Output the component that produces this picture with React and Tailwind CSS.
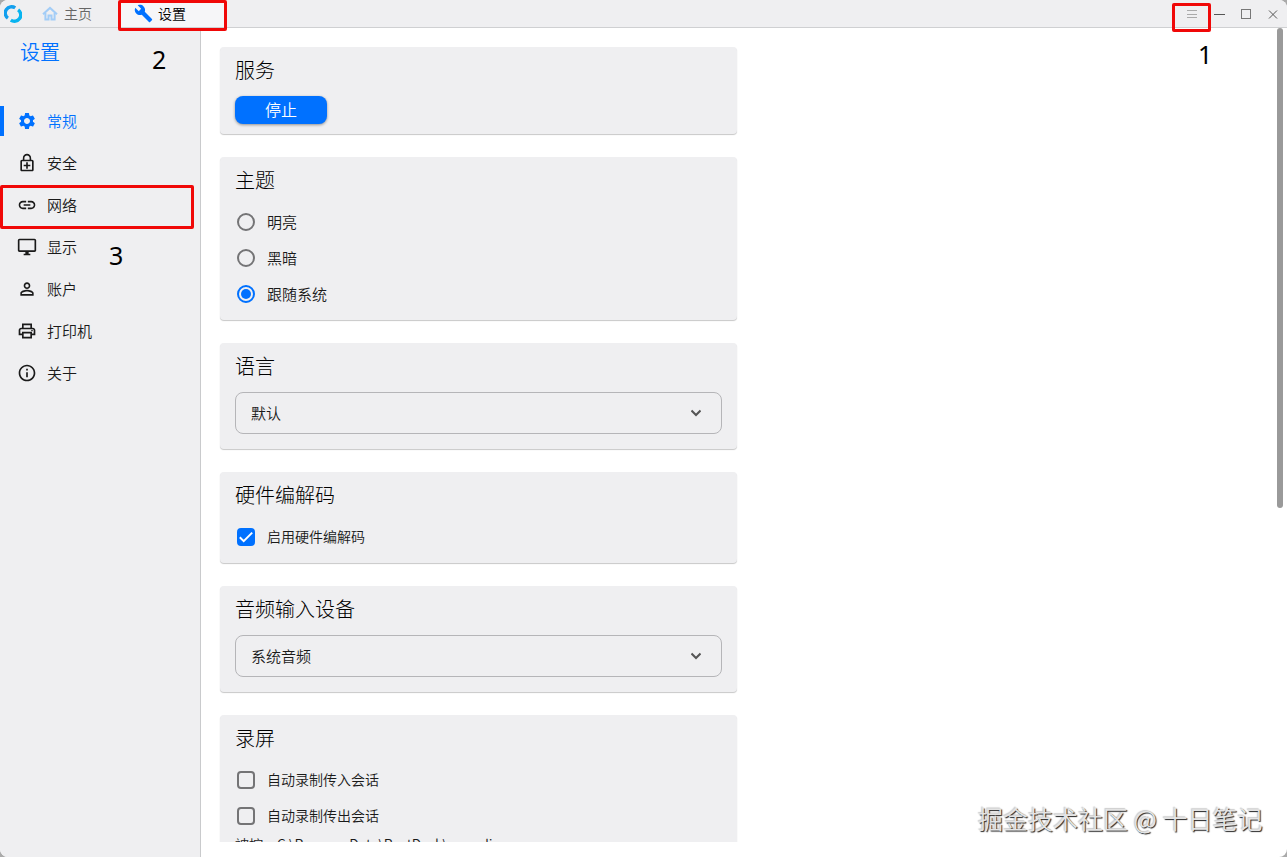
import { useState } from 'react';
import { clsx } from 'clsx';
import {
  MdBuild,
  MdInfoOutline,
  MdLink,
  MdOutlineDesktopWindows,
  MdOutlineEnhancedEncryption,
  MdOutlinePrint,
  MdPersonOutline,
  MdSettings,
} from 'react-icons/md';

const navItems = [
  { id: 'general', label: '常规', icon: MdSettings },
  { id: 'security', label: '安全', icon: MdOutlineEnhancedEncryption },
  { id: 'network', label: '网络', icon: MdLink },
  { id: 'display', label: '显示', icon: MdOutlineDesktopWindows },
  { id: 'account', label: '账户', icon: MdPersonOutline },
  { id: 'printer', label: '打印机', icon: MdOutlinePrint },
  { id: 'about', label: '关于', icon: MdInfoOutline },
];

const themes = ['明亮', '黑暗', '跟随系统'];

const Logo = () => (
  <svg width="18" height="18" viewBox="0 0 18 18" fill="none" strokeWidth="3.4">
    <path d="M3.9 13.2A6.3 6.3 0 0 1 11.2 2.9" stroke="#129fee" />
    <path d="M14.1 4.8A6.3 6.3 0 0 1 6.8 15.1" stroke="#08b4f0" />
  </svg>
);

const HomeIcon = () => (
  <svg width="16" height="16" viewBox="0 0 16 16" fill="none" stroke="#a3cdf7" strokeWidth="2">
    <path d="M1 8.2L8 1.9l7 6.3" />
    <path d="M3.4 7v6.6h3.1V9.4h3v4.2h3.1V7" />
  </svg>
);

const TitleBar = () => (
  <header className="flex h-7 shrink-0 items-center border-b border-[#cfd0d2] bg-[#efeff1]">
    <div className="flex w-[37px] pl-1">
      <Logo />
    </div>
    <div className="flex w-[81px] items-center gap-[6px] pl-[5px] text-sm text-[#666]">
      <HomeIcon />
      <span className="pb-[2px]">主页</span>
    </div>
    <div className="flex h-full w-[108px] items-center gap-[5px] bg-[#f6f6f8] pl-4 text-sm text-black">
      <MdBuild className="size-[19px] text-[#0071ff]" />
      <span className="pb-[2px]">设置</span>
    </div>
    <div className="ml-auto flex items-center pr-2 text-[#555]">
      <svg className="mr-[15px]" width="12" height="12" stroke="#aaa">
        <path d="M1 2.5h10M1 6.5h10M1 9.5h10" />
      </svg>
      <svg className="mr-[15px]" width="12" height="12" stroke="currentColor">
        <path d="M1 6.5h11" />
      </svg>
      <svg className="mr-[15px]" width="12" height="12" fill="none" stroke="#777">
        <rect x="1.5" y="1.5" width="9" height="9" />
      </svg>
      <svg width="12" height="12" stroke="currentColor">
        <path d="M2 2.5l8 8M10 2.5l-8 8" />
      </svg>
    </div>
  </header>
);

const Card = ({ title, className, children }) => (
  <section className={clsx('shrink-0 rounded bg-[#efeff1] px-[15px] shadow-[0_1px_1px_rgba(0,0,0,0.22)]', className)}>
    <h2 className="flex h-[47px] items-center pb-[2px] font-['Noto_Sans_CJK_SC',sans-serif] text-xl font-light text-black">
      {title}
    </h2>
    {children}
  </section>
);

const Radio = ({ label, checked, onChange }) => (
  <div className="flex h-9 cursor-pointer items-center gap-3 pl-[2px]" onClick={onChange}>
    <span
      className={clsx(
        'flex size-[18px] items-center justify-center rounded-full border-2',
        checked ? 'border-[#0071ff]' : 'border-[#747476]'
      )}
    >
      {checked && <span className="size-[10px] rounded-full bg-[#0071ff]" />}
    </span>
    <span className="pb-[2px] text-[15px]">{label}</span>
  </div>
);

const Checkbox = ({ label, defaultChecked = false }) => {
  const [checked, setChecked] = useState(defaultChecked);

  return (
    <div className="flex h-9 cursor-pointer items-center gap-3 pl-[2px]" onClick={() => setChecked(!checked)}>
      <span
        className={clsx(
          'flex size-[18px] items-center justify-center rounded border-2',
          checked ? 'border-[#0071ff] bg-[#0071ff]' : 'border-[#747476]'
        )}
      >
        {checked && (
          <svg className="shrink-0" width="14" height="14" fill="none" stroke="white" strokeWidth="2">
            <path d="M0.8 7.2l3.9 3.9 8.5-8.5" />
          </svg>
        )}
      </span>
      <span className="pb-[2px] text-sm">{label}</span>
    </div>
  );
};

const Select = ({ value }) => (
  <div className="mt-[2px] flex h-[42px] items-center justify-between rounded-lg border border-[#b5b5b8] pr-5 pl-[15px] text-[15px]">
    <span className="pb-[2px]">{value}</span>
    <svg width="10" height="8" fill="none" stroke="#555" strokeWidth="2">
      <path d="M0.5 1.5l4.5 4.5 4.5-4.5" />
    </svg>
  </div>
);

const App = () => {
  const [active, setActive] = useState('general');
  const [theme, setTheme] = useState('跟随系统');

  return (
    <div className="h-[857px] w-[1287px] bg-[#aaa]">
      <div className="relative flex h-full flex-col overflow-hidden rounded-lg bg-white font-['Noto_Sans_CJK_SC_DemiLight','Noto_Sans_CJK_SC',sans-serif] leading-none font-[350] text-[#1a1a1a]">
        <TitleBar />

        <div className="flex min-h-0 flex-1">
          <aside className="w-[201px] shrink-0 border-r border-[#c9cacc] bg-[#efeff1]">
            <h1 className="flex h-[72px] items-start pt-[10px] pl-5 text-xl text-[#0071ff]">设置</h1>
            <nav>
              {navItems.map(({ id, label, icon: Icon }) => (
                <div
                  key={id}
                  onClick={() => setActive(id)}
                  className={clsx('flex h-[42px] cursor-pointer items-center', active === id && 'text-[#0071ff]')}
                >
                  <span className={clsx('h-[30px] w-1', active === id && 'bg-[#0071ff]')} />
                  <Icon className="ml-[13px] size-5" />
                  <span className="ml-[10px] pb-[2px] text-[15px]">{label}</span>
                </div>
              ))}
            </nav>
          </aside>

          <main className="mb-[15px] flex flex-1 overflow-hidden pt-[19px] pl-[19px]">
            <div className="flex w-[517px] flex-col gap-[23px]">
              <Card title="服务" className="h-[87px]">
                <button className="mt-[2px] flex h-7 w-[92px] items-center justify-center rounded-lg bg-[#0071ff] pb-[2px] text-base text-white shadow-[0_1px_3px_rgba(0,0,0,0.4)]">
                  停止
                </button>
              </Card>

              <Card title="主题" className="h-[163px]">
                {themes.map((name) => (
                  <Radio key={name} label={name} checked={theme === name} onChange={() => setTheme(name)} />
                ))}
              </Card>

              <Card title="语言" className="h-[106px]">
                <Select value="默认" />
              </Card>

              <Card title="硬件编解码" className="h-[91px]">
                <Checkbox label="启用硬件编解码" defaultChecked />
              </Card>

              <Card title="音频输入设备" className="h-[106px]">
                <Select value="系统音频" />
              </Card>

              <Card title="录屏" className="h-[180px]">
                <Checkbox label="自动录制传入会话" />
                <Checkbox label="自动录制传出会话" />
                <p className="flex gap-[10px] text-sm">
                  <span>被控:</span>
                  <span className="tracking-[-0.15px]">C:\ProgramData\RustDesk\recording</span>
                </p>
              </Card>
            </div>
            <div className="mr-1 ml-auto -mt-[19px] h-[480px] w-[6px] rounded-full bg-[#9a9a9a]" />
          </main>
        </div>

        {/* step markers */}
        <div className="absolute top-0 left-[118px] h-[31px] w-[109px] rounded-xs border-3 border-[#f00808]" />
        <div className="absolute top-[3px] left-[1172px] h-[29px] w-[39px] rounded-xs border-3 border-[#f00808]" />
        <div className="absolute top-[185px] left-0 h-[44px] w-[194px] rounded-xs border-3 border-[#f00808]" />
        <span className="absolute top-[42px] left-[1198px] font-['Noto_Sans',sans-serif] text-[25px] font-normal text-black">1</span>
        <span className="absolute top-[47px] left-[152px] font-['Noto_Sans',sans-serif] text-[25px] font-normal text-black">2</span>
        <span className="absolute top-[243px] left-[109px] font-['Noto_Sans',sans-serif] text-[25px] font-normal text-black">3</span>

        <span className="absolute top-[806px] left-[978px] text-[25px] font-normal whitespace-nowrap text-[#e4e4e4] [text-shadow:1px_1px_1px_#222,-1px_-1px_1px_#ccc]">
          掘金技术社区 @ 十日笔记
        </span>
      </div>
    </div>
  );
};

export default App;
